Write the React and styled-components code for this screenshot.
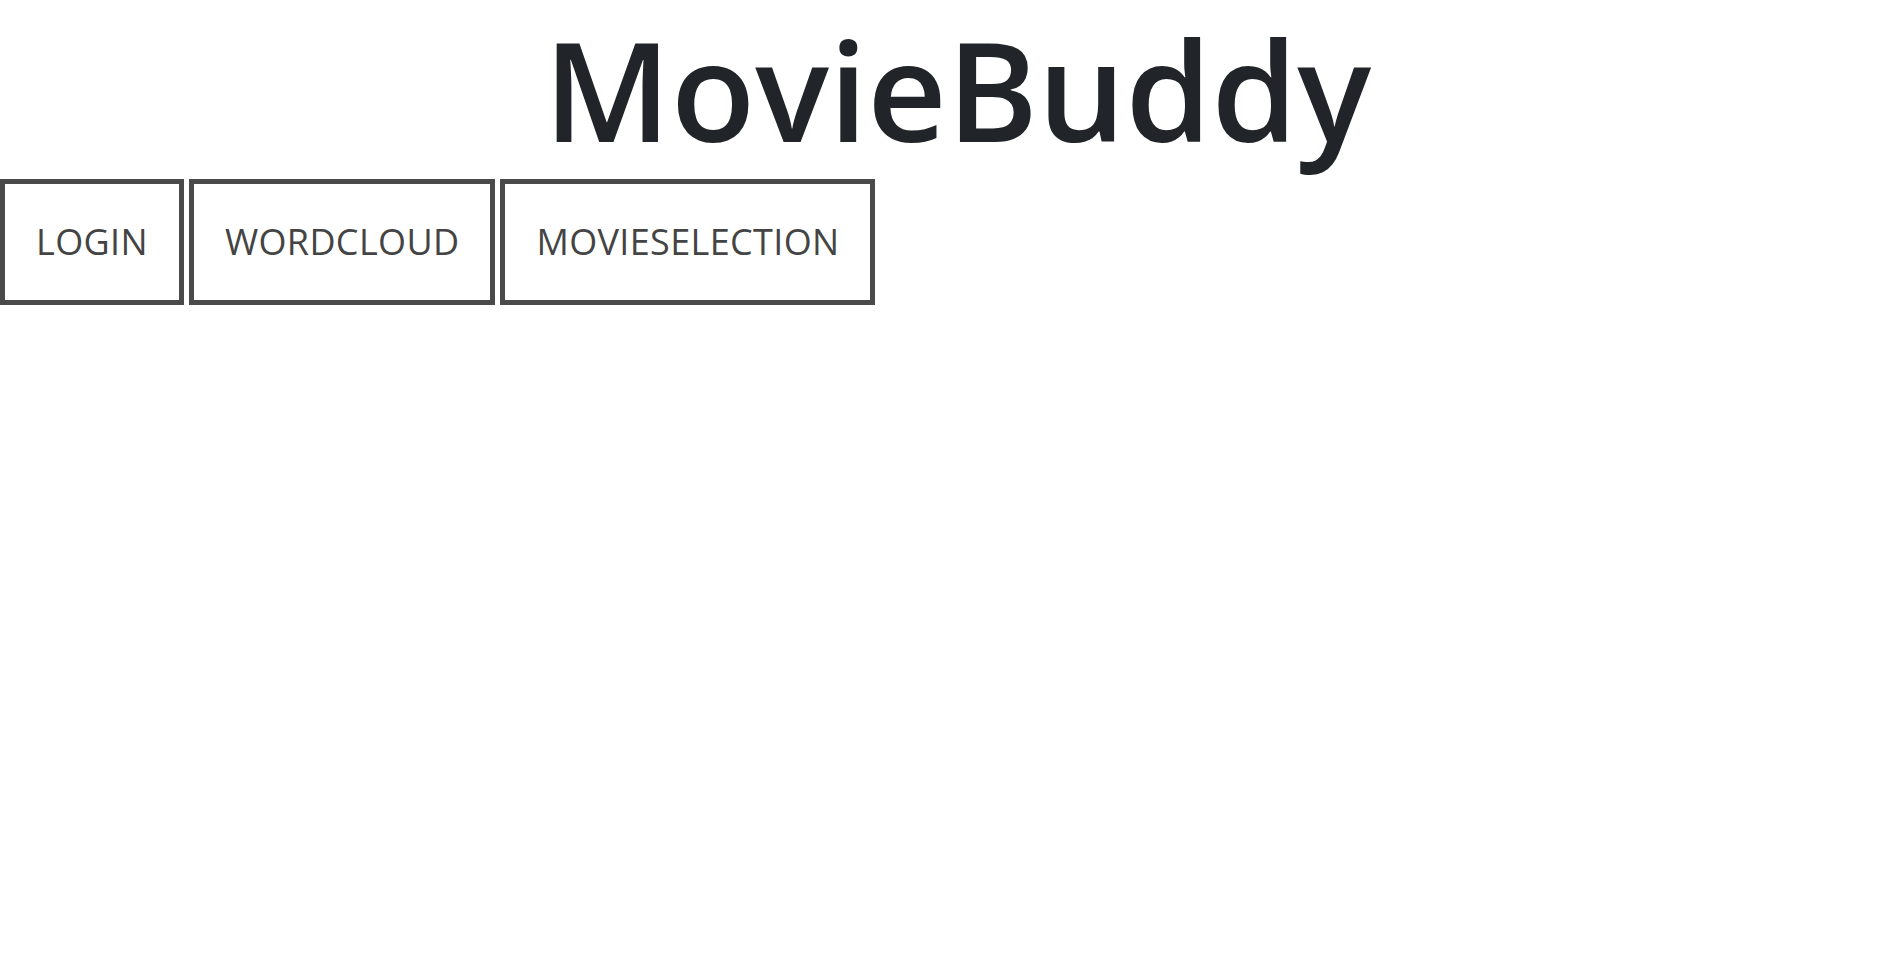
import React from "react";
import styled, { createGlobalStyle } from "styled-components";

const Global = createGlobalStyle`
  html, body { margin: 0; padding: 0; background: #fff; }
  body { font-family: "Open Sans", "Noto Sans", sans-serif; color: #212529; }
`;

const Page = styled.div`
  display: flex;
  flex-direction: column;
`;

const Title = styled.h1`
  margin: 6px 0 7px;
  padding-left: 28px;
  text-align: center;
  font-family: "Open Sans", sans-serif;
  font-weight: 600;
  font-size: 138px;
  line-height: 1.2;
  color: #212529;
`;

const Nav = styled.nav`
  display: flex;
  gap: 5px;
`;

const NavButton = styled.a`
  display: block;
  border: 5px solid #4a4a4a;
  padding: 33px 31px 34px 31px;
  font-family: "Open Sans", sans-serif;
  font-weight: 400;
  font-size: 36px;
  line-height: 49px;
  letter-spacing: 0.35px;
  color: #444;
  text-decoration: none;
  text-transform: uppercase;
  cursor: pointer;
`;

export default function App() {
  const items = ["Login", "WordCloud", "MovieSelection"];
  return (
    <Page>
      <Global />
      <Title>MovieBuddy</Title>
      <Nav>
        {items.map((t) => (
          <NavButton key={t}>{t}</NavButton>
        ))}
      </Nav>
    </Page>
  );
}
